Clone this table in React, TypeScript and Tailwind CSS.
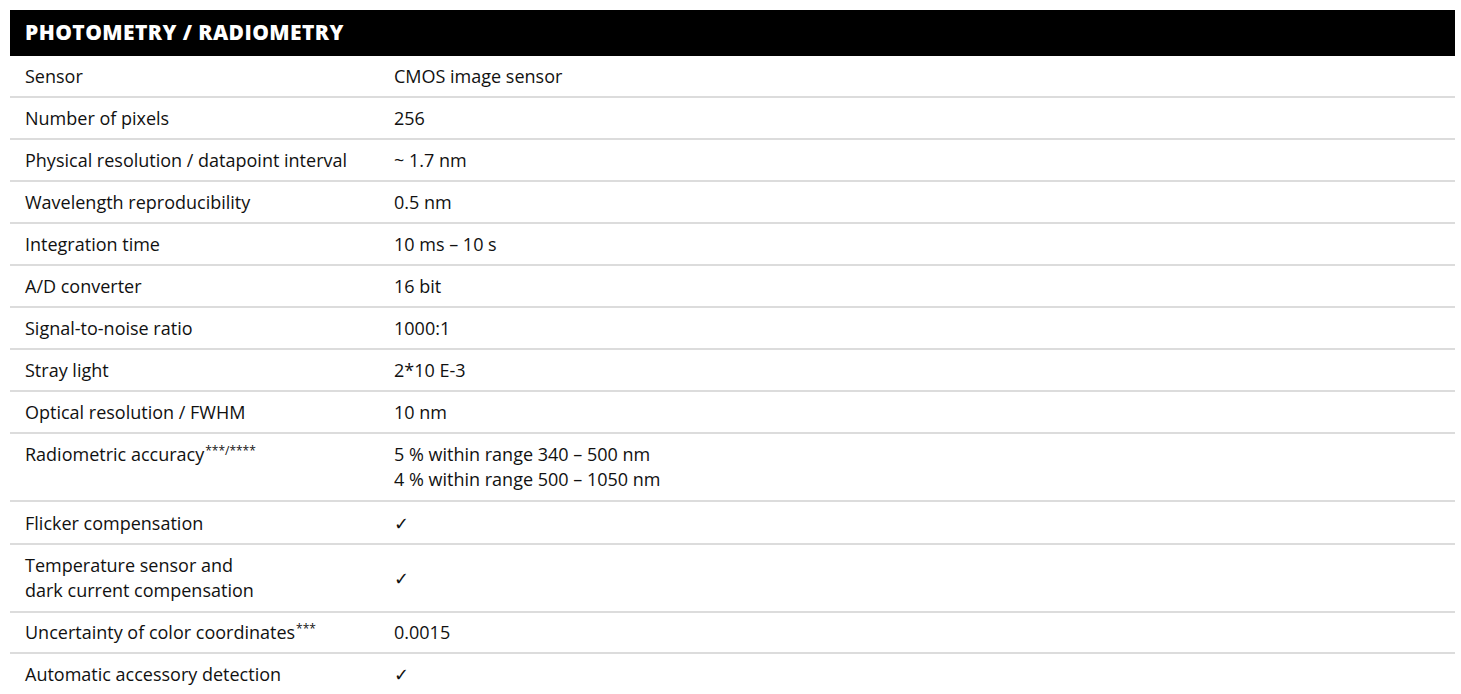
import React from "react";

const Sup = ({ children }: { children: React.ReactNode }) => (
  <span className="text-[12px] leading-none relative top-[-6px] ml-[1px]">{children}</span>
);

const rows: { label: React.ReactNode; value: React.ReactNode; pad: string }[] = [
  { label: "Sensor", value: "CMOS image sensor", pad: "pt-[8px] pb-[7px]" },
  { label: "Number of pixels", value: "256", pad: "pt-[8px] pb-[7px]" },
  { label: "Physical resolution / datapoint interval", value: "~ 1.7 nm", pad: "pt-[8px] pb-[7px]" },
  { label: "Wavelength reproducibility", value: "0.5 nm", pad: "pt-[8px] pb-[7px]" },
  { label: "Integration time", value: "10 ms – 10 s", pad: "pt-[8px] pb-[7px]" },
  { label: "A/D converter", value: "16 bit", pad: "pt-[8px] pb-[7px]" },
  { label: "Signal-to-noise ratio", value: "1000:1", pad: "pt-[8px] pb-[7px]" },
  { label: "Stray light", value: "2*10 E-3", pad: "pt-[8px] pb-[7px]" },
  { label: "Optical resolution / FWHM", value: "10 nm", pad: "pt-[8px] pb-[7px]" },
  {
    label: (
      <>
        Radiometric accuracy<Sup>***/****</Sup>
      </>
    ),
    value: (
      <>
        5 % within range 340 – 500 nm
        <br />4 % within range 500 – 1050 nm
      </>
    ),
    pad: "pt-[8px] pb-[8px]",
  },
  { label: "Flicker compensation", value: "✓", pad: "pt-[9px] pb-[7px]" },
  {
    label: (
      <>
        Temperature sensor and
        <br />
        dark current compensation
      </>
    ),
    value: "✓",
    pad: "pt-[8px] pb-[8px]",
  },
  {
    label: (
      <>
        Uncertainty of color coordinates<Sup>***</Sup>
      </>
    ),
    value: "0.0015",
    pad: "pt-[7px] pb-[7px]",
  },
  { label: "Automatic accessory detection", value: "✓", pad: "pt-[8px] pb-[7px]" },
];

export default function App() {
  return (
    <div
      className="w-[1461px] h-[694px] bg-white overflow-hidden pt-[10px] pl-[10px]"
      style={{ fontFamily: '"Open Sans", "Noto Sans", sans-serif' }}
    >
      <div className="w-[1445px]">
        <div className="h-[46px] bg-black flex items-center pl-[15px]">
          <span className="text-white font-extrabold text-[21px] tracking-[0.02em]">
            PHOTOMETRY / RADIOMETRY
          </span>
        </div>
        {rows.map((r, i) => (
          <div
            key={i}
            className={`flex items-center pl-[15px] ${r.pad} border-b-2 border-[#dcdcdc] text-[18px] leading-[25px] text-[#111]`}
          >
            <div className={`w-[369px] shrink-0 ${i === 9 ? "self-start" : ""}`}>{r.label}</div>
            <div className="flex-1">{r.value}</div>
          </div>
        ))}
      </div>
    </div>
  );
}
